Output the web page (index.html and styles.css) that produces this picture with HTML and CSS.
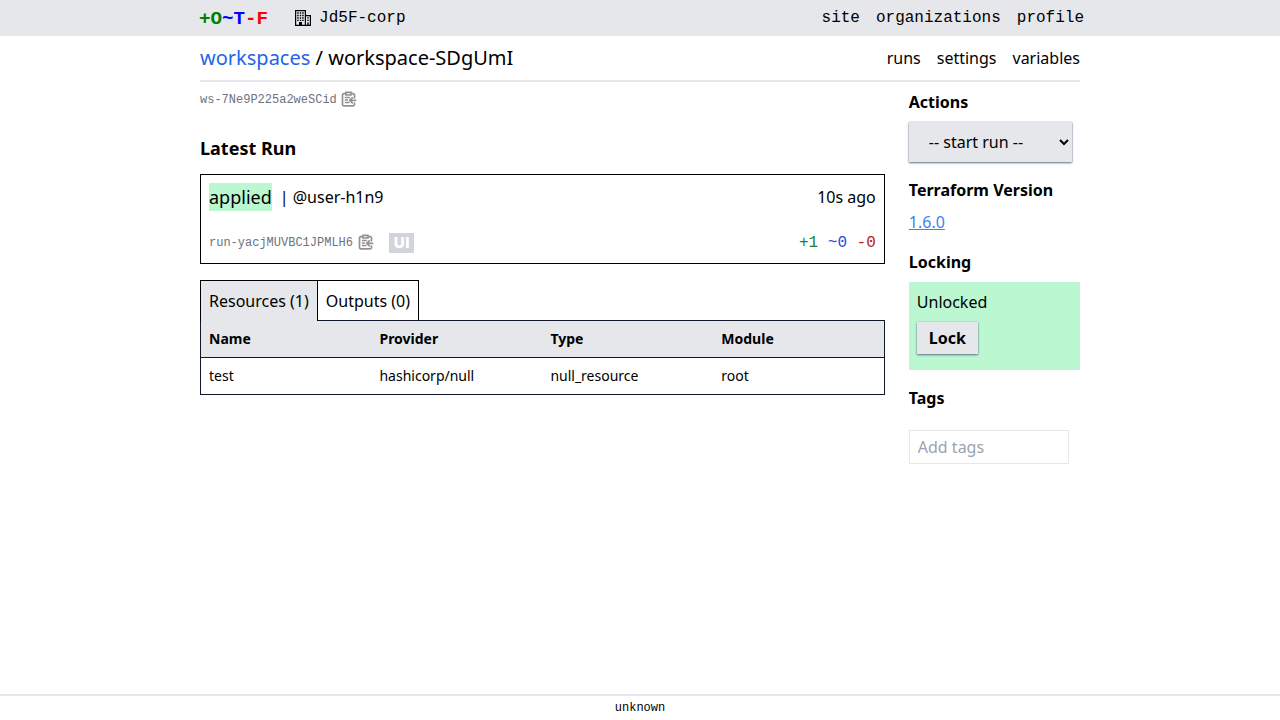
FILE: index.html
```html
<!DOCTYPE html>
<html lang="en">
<head>
<meta charset="utf-8">
<title>workspace-SDgUmI</title>
<link rel="stylesheet" href="styles.css">
</head>
<body>
<svg class="defs" aria-hidden="true">
  <symbol id="clip" viewBox="0 0 16 16">
    <path d="M5 2.700H2.800Q1.500 2.700 1.500 4V13.500Q1.500 14.800 2.800 14.800H12.200Q13.500 14.800 13.500 13.500V11.500M13.500 7.500V4Q13.500 2.700 12.200 2.700H10.500" />
    <path d="M5 1.400H10V4H5Z" />
    <path d="M3.800 6.500H9M3.800 9H7M3.800 11.500H8.500M15.300 9.300H9M11.800 6.300L8.800 9.300L11.800 12.300" />
  </symbol>
</svg>
<header class="top">
  <div class="top-inner">
    <a class="logo"><span class="add">+O</span><span class="change">~T</span><span class="remove">-F</span></a>
    <a class="org">
      <svg class="building" viewBox="0 0 16 16">
        <path fill-rule="evenodd" d="M0 0H11V5H16V16H0ZM1.200 1.200V14.800H4V12H7V14.800H9.800V1.200ZM11 6.200V14.800H12.300V12.500H13.700V14.800H14.800V6.200Z" />
        <path d="M2.200 2.200H3.700V3.700H2.200ZM4.800 2.200H6.200V3.700H4.800ZM7.200 2.200H8.700V3.700H7.200ZM2.200 4.700H3.700V6.200H2.200ZM4.800 4.700H6.200V6.200H4.800ZM7.200 4.700H8.700V6.200H7.200ZM2.200 7.200H3.700V8.700H2.200ZM4.800 7.200H6.200V8.700H4.800ZM7.200 7.200H8.700V8.700H7.200ZM2.200 9.700H3.700V11H2.200ZM4.800 9.700H6.200V11H4.800ZM7.200 9.700H8.700V11H7.200ZM12.200 7.300H13.700V8.600H12.200ZM12.200 9.700H13.700V11H12.200Z" />
      </svg>
      <span>Jd5F-corp</span>
    </a>
    <nav class="top-nav"><a>site</a><a>organizations</a><a>profile</a></nav>
  </div>
</header>
<main class="content">
  <div class="title-bar">
    <div class="crumbs"><a>workspaces</a> / workspace-SDgUmI</div>
    <nav class="links"><a>runs</a><a>settings</a><a>variables</a></nav>
  </div>
  <div class="columns">
    <section>
      <div class="ident"><span>ws-7Ne9P225a2weSCid</span><svg class="clip"><use href="#clip" /></svg></div>
      <h3 class="latest">Latest Run</h3>
      <div class="run">
        <div class="row">
          <div class="who"><span class="status">applied</span><span>| @user-h1n9</span></div>
          <span>10s ago</span>
        </div>
        <div class="row">
          <div class="ident"><span>run-yacjMUVBC1JPMLH6</span><svg class="clip"><use href="#clip" /></svg><b class="ui">UI</b></div>
          <div class="changes"><span class="plus">+1</span><span class="tilde">~0</span><span class="minus">-0</span></div>
        </div>
      </div>
      <div class="tabs"><span class="tab active">Resources (1)</span><span class="tab">Outputs (0)</span></div>
      <table>
        <thead><tr><th>Name</th><th>Provider</th><th>Type</th><th>Module</th></tr></thead>
        <tbody><tr><td>test</td><td>hashicorp/null</td><td>null_resource</td><td>root</td></tr></tbody>
      </table>
    </section>
    <aside class="side">
      <div class="block">
        <h5>Actions</h5>
        <select class="start"><option>-- start run --</option><option>plan only</option><option>plan and apply</option></select>
      </div>
      <div class="block"><h5>Terraform Version</h5><a class="version">1.6.0</a></div>
      <div class="block">
        <h5>Locking</h5>
        <div class="lock"><span>Unlocked</span><button>Lock</button></div>
      </div>
      <div class="block"><h5>Tags</h5><input class="tags" placeholder="Add tags"></div>
    </aside>
  </div>
</main>
<footer>unknown</footer>
</body>
</html>
```
FILE: styles.css
```css
* { box-sizing: border-box; margin: 0; padding: 0; }
body {
  display: flex;
  flex-direction: column;
  height: 100vh;
  font: 16px/24px "Noto Sans", sans-serif;
  color: #000;
  background: #fff;
}
.defs { position: absolute; width: 0; height: 0; }
.top {
  height: 36px;
  background: #e5e7eb;
  font-family: "Liberation Mono", monospace;
}
.top-inner {
  display: flex;
  align-items: center;
  width: 888px;
  height: 36px;
  margin: 0 auto;
  padding-left: 3px;
}
.logo { font-size: 19.2px; font-weight: 700; line-height: 24px; padding-top: 1px; }
.add { color: #008000; }
.change { color: #00f; }
.remove { color: #f00; }
.org { display: flex; align-items: center; gap: 8px; margin-left: 27px; }
.org span { padding-bottom: 1px; }
.building { width: 16px; height: 16px; }
.top-nav { display: flex; gap: 16px; margin-left: auto; padding-bottom: 1px; }
.content { width: 880px; margin: 0 auto; flex: 1; }
.title-bar {
  display: flex;
  justify-content: space-between;
  align-items: center;
  height: 46px;
  border-bottom: 2px solid #e5e7eb;
}
.crumbs { font-size: 20px; line-height: 28px; }
.crumbs a { color: #2563eb; }
.links { display: flex; gap: 16px; }
.columns { display: grid; grid-template-columns: 4fr 1fr; gap: 24px; padding-top: 8px; }
.ident {
  display: flex;
  align-items: center;
  height: 18px;
  font: 12px/16px "Liberation Mono", monospace;
  color: #6b7280;
}
.ident span { padding-top: 1px; }
.clip {
  width: 16px;
  height: 16px;
  margin-left: 4.5px;
  fill: none;
  stroke: #929292;
  stroke-width: 1.7;
}
.latest { margin-top: 26px; font-size: 18px; line-height: 28px; font-weight: 700; }
.run {
  display: flex;
  flex-direction: column;
  gap: 17px;
  height: 90px;
  margin-top: 12px;
  padding: 8px;
  border: 1px solid #000;
}
.row { display: flex; justify-content: space-between; align-items: center; height: 28px; flex: none; }
.who { display: flex; align-items: center; gap: 8px; }
.status { background: #bbf7d0; font-size: 18px; line-height: 28px; }
.ui {
  width: 25px;
  margin: 1px 0 0 15.5px;
  padding-left: 1px;
  background: #d1d5db;
  color: #fff;
  font: 800 15px/20px Inter, sans-serif;
  letter-spacing: 0.8px;
  text-align: center;
}
.changes { display: flex; gap: 9.6px; padding-top: 2px; font-family: "Liberation Mono", monospace; }
.plus { color: #15803d; }
.tilde { color: #1d4ed8; }
.minus { color: #b91c1c; }
.tabs { display: flex; height: 40px; margin-top: 16px; }
.tab { border: solid #000; border-width: 1px 1px 0 0; padding: 8px; }
.active {
  position: relative;
  height: 41px;
  border-left-width: 1px;
  background: #e5e7eb;
}
table {
  width: 100%;
  table-layout: fixed;
  border-collapse: collapse;
  border: 1px solid #0f172a;
  font-size: 14px;
  line-height: 20px;
  text-align: left;
}
th, td { height: 37px; padding: 8px; }
th { font-weight: 700; background: #e5e7eb; border-bottom: 1px solid #0f172a; }
.side { display: flex; flex-direction: column; gap: 16px; }
.block { display: flex; flex-direction: column; align-items: flex-start; gap: 8px; }
h5 { font-size: 16px; line-height: 24px; font-weight: 700; }
.start {
  width: 163px;
  height: 40px;
  padding: 8px 0 8px 16px;
  border: 0;
  background-color: #e5e7eb;
  color: #000;
  font: inherit;
  box-shadow: 0 1px 2px #64748b, 0 0 1px #94a3b8;
}
.version { color: #3b82f6; text-decoration: underline; }
.lock {
  display: flex;
  flex-direction: column;
  align-items: flex-start;
  gap: 8px;
  width: 100%;
  height: 88px;
  padding: 8px;
  background: #bbf7d0;
}
.lock button {
  width: 61px;
  height: 32px;
  border: 0;
  background: #e5e7eb;
  color: #000;
  font: 700 16px/24px "Noto Sans", sans-serif;
  box-shadow: 0 1px 2px #64748b, 0 0 1px #94a3b8;
}
.tags {
  width: 160px;
  height: 34px;
  margin-top: 12px;
  padding: 0 8px;
  border: 1px solid #e5e7eb;
  font: inherit;
}
.tags::placeholder { color: #9ca3af; opacity: 1; }
footer {
  height: 26px;
  border-top: 2px solid #e5e7eb;
  text-align: center;
  font: 12px/24px "Liberation Mono", monospace;
}
```
